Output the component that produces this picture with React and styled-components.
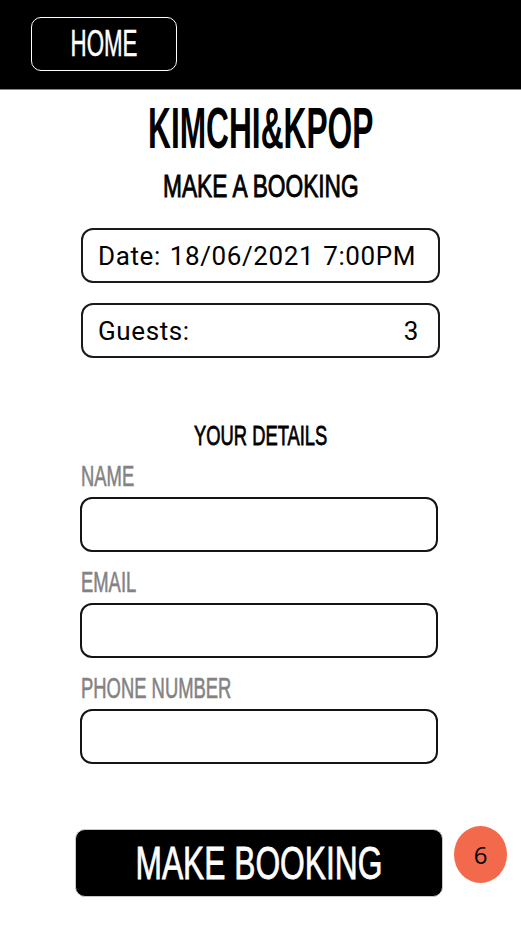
import React from "react";
import styled, { createGlobalStyle } from "styled-components";

const GlobalStyle = createGlobalStyle`
  html, body {
    margin: 0;
    padding: 0;
    background: #ffffff;
  }
  * {
    box-sizing: border-box;
  }
`;

// no condensed face installed, so Liberation Sans gets squeezed to an Oswald-ish width
const condensed = `"Liberation Sans", Arial, sans-serif`;

const App = () => (
  <Page>
    <GlobalStyle />
    <Header>
      <HomeButton type="button">
        <Squeeze $x={0.62}>HOME</Squeeze>
      </HomeButton>
    </Header>
    <Main>
      <Title>
        <Squeeze $x={0.556}>KIMCHI&amp;KPOP</Squeeze>
      </Title>
      <Subtitle>
        <Squeeze $x={0.71}>MAKE A BOOKING</Squeeze>
      </Subtitle>
      <Summary>
        <InfoBox>
          <span>Date: 18/06/2021 7:00PM</span>
        </InfoBox>
        <InfoBox>
          <span>Guests:</span>
          <span>3</span>
        </InfoBox>
      </Summary>
      <SectionTitle>
        <Squeeze $x={0.655}>YOUR DETAILS</Squeeze>
      </SectionTitle>
      <Form>
        <Field>
          <Label>
            <Squeeze $x={0.635} $origin="left">NAME</Squeeze>
          </Label>
          <Input type="text" />
        </Field>
        <Field>
          <Label>
            <Squeeze $x={0.635} $origin="left">EMAIL</Squeeze>
          </Label>
          <Input type="email" />
        </Field>
        <Field>
          <Label>
            <Squeeze $x={0.635} $origin="left">PHONE NUMBER</Squeeze>
          </Label>
          <Input type="tel" />
        </Field>
      </Form>
      <Footer>
        <BookButton type="button">
          <Squeeze $x={0.69}>MAKE BOOKING</Squeeze>
          <Badge>6</Badge>
        </BookButton>
      </Footer>
    </Main>
  </Page>
);

export default App;

const Page = styled.div`
  width: 521px;
  min-height: 927px;
  background: #ffffff;
`;

const Header = styled.header`
  height: 90px;
  background: #000000;
  border-bottom: 1px solid #8a8a8a;
  padding: 17px 0 0 31px;
`;

const Squeeze = styled.span`
  display: inline-block;
  white-space: nowrap;
  transform: scaleX(${p => p.$x});
  transform-origin: ${p => p.$origin || "center"};
`;

const HomeButton = styled.button`
  width: 146px;
  height: 54px;
  display: flex;
  align-items: center;
  justify-content: center;
  background: #000000;
  color: #ffffff;
  border: 1.5px solid #ffffff;
  border-radius: 10px;
  font-family: ${condensed};
  font-size: 36px;
  line-height: 1;
  -webkit-text-stroke: 0.5px #ffffff;
  padding: 0;
`;

const Main = styled.main`
  display: flex;
  flex-direction: column;
  align-items: center;
`;

const Title = styled.h1`
  margin: 10px 0 0;
  font-family: ${condensed};
  font-weight: bold;
  font-size: 57px;
  line-height: 1;
  color: #000000;
`;

const Subtitle = styled.h2`
  margin: 13px 0 0;
  font-family: ${condensed};
  font-weight: normal;
  font-size: 32px;
  line-height: 1;
  -webkit-text-stroke: 0.9px #000000;
  color: #000000;
`;

const Summary = styled.div`
  margin-top: 26px;
  display: flex;
  flex-direction: column;
  gap: 20px;
`;

const InfoBox = styled.div`
  width: 359px;
  height: 55px;
  display: flex;
  align-items: center;
  justify-content: space-between;
  padding: 0 19px 0 15px;
  border: 2px solid #1a1a1a;
  border-radius: 12px;
  font-family: Roboto, "Noto Sans", sans-serif;
  font-size: 26px;
  letter-spacing: 0.6px;
  word-spacing: 2px;
  white-space: nowrap;
  color: #000000;
`;

const SectionTitle = styled.h3`
  margin: 64px 0 0;
  font-family: ${condensed};
  font-weight: normal;
  font-size: 28px;
  line-height: 1;
  -webkit-text-stroke: 0.8px #000000;
  color: #000000;
`;

const Form = styled.form`
  margin: 12px 3px 0 0;
  display: flex;
  flex-direction: column;
  gap: 16px;
`;

const Field = styled.div`
  display: flex;
  flex-direction: column;
  gap: 6px;
`;

const Label = styled.label`
  font-family: ${condensed};
  font-weight: normal;
  font-size: 29px;
  line-height: 1;
  -webkit-text-stroke: 0.6px #838383;
  color: #838383;
  padding-left: 1px;
`;

const Input = styled.input`
  width: 358px;
  height: 55px;
  border: 2px solid #141414;
  border-radius: 12px;
  background: #ffffff;
  font-family: Roboto, sans-serif;
  font-size: 20px;
  padding: 0 14px;
  outline: none;
`;

const Footer = styled.div`
  margin: 65px 3px 0 0;
  padding-bottom: 28px;
  display: flex;
  justify-content: center;
`;

const BookButton = styled.button`
  position: relative;
  width: 368px;
  height: 68px;
  display: flex;
  align-items: center;
  justify-content: center;
  background: #000000;
  color: #ffffff;
  border: 1px solid #c8c8c8;
  border-radius: 10px;
  font-family: ${condensed};
  font-weight: normal;
  font-size: 46px;
  line-height: 1;
  -webkit-text-stroke: 0.8px #ffffff;
  padding: 0;
`;

const Badge = styled.span`
  position: absolute;
  left: calc(100% + 12px);
  top: -4px;
  width: 53px;
  height: 57px;
  border-radius: 50%;
  background: #f2694b;
  color: #000000;
  display: flex;
  align-items: center;
  justify-content: center;
  font-family: "Open Sans", sans-serif;
  font-size: 24px;
  font-weight: normal;
  -webkit-text-stroke: 0;
`;
